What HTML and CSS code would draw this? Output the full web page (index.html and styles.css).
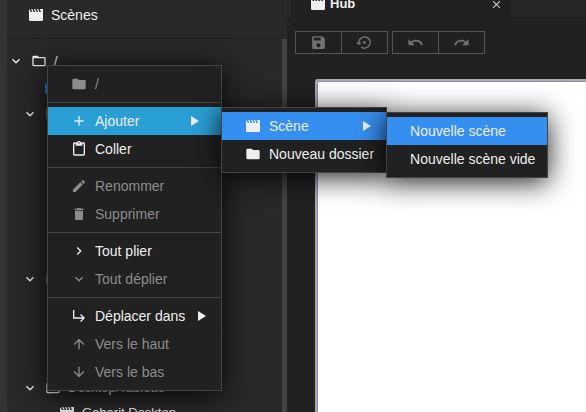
FILE: index.html
```html
<!DOCTYPE html>
<html lang="fr">
<head>
<meta charset="utf-8">
<title>Scènes</title>
<link rel="stylesheet" href="styles.css">
</head>
<body>
<svg class="sprite" aria-hidden="true">
  <symbol id="movie" viewBox="0 0 24 24"><path d="M17.500 3l2 4.500h-2.300l-2-4.500h-2l2 4.500h-2.300l-2-4.500h-2l2 4.500H8.600L6.600 3h-2l2 4.500H4.300L2.300 3.500A2 2 0 0 0 1.500 5v14a2 2 0 0 0 2 2h17a2 2 0 0 0 2-2V3z"/></symbol>
  <symbol id="folder" viewBox="0 0 24 24"><path d="M10 4H4a2 2 0 0 0-2 2v12a2 2 0 0 0 2 2h16a2 2 0 0 0 2-2V8a2 2 0 0 0-2-2h-8z"/></symbol>
  <symbol id="folder-open" viewBox="0 0 24 24"><path d="M20 18H4V8h16m0-2h-8l-2-2H4a2 2 0 0 0-2 2v12a2 2 0 0 0 2 2h16a2 2 0 0 0 2-2V8a2 2 0 0 0-2-2z"/></symbol>
  <symbol id="plus" viewBox="0 0 24 24"><path d="M19 13h-6v6h-2v-6H5v-2h6V5h2v6h6z"/></symbol>
  <symbol id="clipboard" viewBox="0 0 24 24"><path d="M19 20H5V4h2v3h10V4h2m-7-2a1 1 0 1 1 0 2 1 1 0 0 1 0-2m7 0h-4.200a3 3 0 0 0-5.600 0H5a2 2 0 0 0-2 2v16a2 2 0 0 0 2 2h14a2 2 0 0 0 2-2V4a2 2 0 0 0-2-2z"/></symbol>
  <symbol id="pencil" viewBox="0 0 24 24"><path d="M20.7 7c.4-.4.4-1 0-1.400l-2.300-2.300c-.4-.4-1-.4-1.400 0l-1.900 1.800 3.800 3.800M3 17.200V21h3.800L17.800 9.900l-3.800-3.700z"/></symbol>
  <symbol id="trash" viewBox="0 0 24 24"><path d="M19 4h-3.500l-1-1h-5l-1 1H5v2h14M6 19a2 2 0 0 0 2 2h8a2 2 0 0 0 2-2V7H6z"/></symbol>
  <symbol id="right" viewBox="0 0 24 24"><path d="M8.600 16.600L13.200 12 8.600 7.400 10 6l6 6-6 6z"/></symbol>
  <symbol id="down" viewBox="0 0 24 24"><path d="M7.400 8.600L12 13.200l4.600-4.600L18 10l-6 6-6-6z"/></symbol>
  <symbol id="move" viewBox="0 0 24 24"><path d="M21 15l-6 6-1.400-1.400 3.600-3.600H3V3h2v11h12.200l-3.600-3.600L15 9z"/></symbol>
  <symbol id="up-arrow" viewBox="0 0 24 24"><path d="M13 20h-2V8l-5.500 5.500-1.400-1.400L12 4.200l7.900 7.900-1.400 1.400L13 8z"/></symbol>
  <symbol id="down-arrow" viewBox="0 0 24 24"><path d="M11 4h2v12l5.500-5.500 1.400 1.400-7.900 7.900-7.900-7.900 1.400-1.400L11 16z"/></symbol>
  <symbol id="save" viewBox="0 0 24 24"><path d="M15 9H5V5h10m-3 14a3 3 0 1 1 0-6 3 3 0 0 1 0 6m5-16H5a2 2 0 0 0-2 2v14a2 2 0 0 0 2 2h14a2 2 0 0 0 2-2V7z"/></symbol>
  <symbol id="restore" viewBox="0 0 24 24"><path d="M14 12a2 2 0 1 0-4 0 2 2 0 0 0 4 0M12 3a9 9 0 0 0-9 9H0l4 4 4-4H5a7 7 0 1 1 2.900 5.700l-1.400 1.400A9 9 0 1 0 12 3z"/></symbol>
  <symbol id="undo" viewBox="0 0 24 24"><path d="M12.500 8c-2.700 0-5 1-6.900 2.600L2 7v9h9l-3.600-3.600A8 8 0 0 1 12.500 10.500c3.500 0 6.500 2.300 7.600 5.500l2.400-.8A10.500 10.500 0 0 0 12.500 8z"/></symbol>
  <symbol id="redo" viewBox="0 0 24 24"><path d="M18.400 10.600A10.500 10.500 0 0 0 1.500 15.200l2.400.8a8 8 0 0 1 12.700-3.600L13 16h9V7z"/></symbol>
  <symbol id="close" viewBox="0 0 24 24"><path d="M19 6.400L17.600 5 12 10.600 6.400 5 5 6.400l5.600 5.600L5 17.600 6.400 19l5.600-5.600 5.600 5.600 1.400-1.400-5.600-5.600z"/></symbol>
</svg>

<div class="app">
  <aside class="sidebar">
    <h1 class="sidebar-title"><svg class="icon"><use href="#movie"/></svg>Scènes</h1>
    <div class="sidebar-body">
      <div class="tree">
        <div class="group">
          <div class="row root"><svg class="icon"><use href="#down"/></svg><svg class="icon"><use href="#folder-open"/></svg><span>/</span></div>
          <div class="row file"><svg class="icon hub"><use href="#movie"/></svg></div>
        </div>
        <div class="group long">
          <div class="row folder"><svg class="icon"><use href="#down"/></svg><svg class="icon dim"><use href="#folder-open"/></svg></div>
        </div>
        <div class="group medium">
          <div class="row folder"><svg class="icon"><use href="#down"/></svg><svg class="icon dim"><use href="#folder-open"/></svg></div>
          <div class="row"></div>
          <div class="row flagged"><i class="flag"></i></div>
        </div>
        <div class="group">
          <div class="row folder"><svg class="icon"><use href="#down"/></svg><svg class="icon"><use href="#folder-open"/></svg><span>Desktop/Tablette</span></div>
          <div class="row nested"><svg class="icon"><use href="#movie"/></svg><span>Gabarit Desktop</span></div>
        </div>
      </div>
      <div class="scrollbar"></div>
    </div>
  </aside>

  <main class="editor">
    <div class="tabs">
      <div class="tab"><svg class="icon"><use href="#movie"/></svg><b>Hub</b><button class="close" aria-label="Fermer"><svg><use href="#close"/></svg></button></div>
    </div>
    <div class="toolbar">
      <div class="tools">
        <button aria-label="Enregistrer"><svg class="icon"><use href="#save"/></svg></button>
        <button aria-label="Restaurer"><svg class="icon"><use href="#restore"/></svg></button>
      </div>
      <div class="tools">
        <button aria-label="Annuler"><svg class="icon"><use href="#undo"/></svg></button>
        <button aria-label="Rétablir"><svg class="icon"><use href="#redo"/></svg></button>
      </div>
    </div>
    <div class="canvas"></div>
  </main>
</div>

<ul class="menu context">
  <li><button disabled><svg class="icon"><use href="#folder"/></svg>/</button></li>
  <li class="sep"></li>
  <li class="has-sub">
    <button class="open"><svg class="icon"><use href="#plus"/></svg>Ajouter<i class="arrow"></i></button>
    <ul class="menu sub">
      <li class="has-sub">
        <button class="hover"><svg class="icon"><use href="#movie"/></svg>Scène<i class="arrow"></i></button>
        <ul class="menu sub">
          <li><button class="hover">Nouvelle scène</button></li>
          <li><button>Nouvelle scène vide</button></li>
        </ul>
      </li>
      <li><button><svg class="icon"><use href="#folder"/></svg>Nouveau dossier</button></li>
    </ul>
  </li>
  <li><button><svg class="icon"><use href="#clipboard"/></svg>Coller</button></li>
  <li class="sep"></li>
  <li><button disabled><svg class="icon"><use href="#pencil"/></svg>Renommer</button></li>
  <li><button disabled><svg class="icon"><use href="#trash"/></svg>Supprimer</button></li>
  <li class="sep"></li>
  <li><button><svg class="icon"><use href="#right"/></svg>Tout plier</button></li>
  <li><button disabled><svg class="icon"><use href="#down"/></svg>Tout déplier</button></li>
  <li class="sep"></li>
  <li><button><svg class="icon"><use href="#move"/></svg>Déplacer dans<i class="arrow"></i></button></li>
  <li><button disabled><svg class="icon"><use href="#up-arrow"/></svg>Vers le haut</button></li>
  <li><button disabled><svg class="icon"><use href="#down-arrow"/></svg>Vers le bas</button></li>
</ul>
</body>
</html>
```
FILE: styles.css
```css
* { box-sizing: border-box; }

body {
  margin: 0;
  overflow: hidden;
  background: #212121;
  color: #eee;
  font: 14px/20px "Liberation Sans", Arial, sans-serif;
}

button {
  margin: 0;
  border: 0;
  background: none;
  color: inherit;
  font: inherit;
}

.sprite { position: absolute; width: 0; height: 0; }
.icon { flex: none; width: 16px; height: 16px; fill: currentColor; }

.app { display: flex; height: 100vh; }

/* Scene list */
.sidebar {
  display: flex;
  flex-direction: column;
  flex: 0 0 287px;
  border-left: 7px solid #333;
  background: #292929;
}
.sidebar-title {
  display: flex;
  align-items: center;
  gap: 7px;
  height: 39px;
  margin: 0;
  padding: 0 21px 8px;
  border-bottom: 1px solid #212121;
  font-size: 14px;
  font-weight: 400;
}
.sidebar-body { display: flex; flex: 1; min-height: 0; }
.tree { flex: 1; padding-top: 9px; overflow: hidden; font-size: 13px; }
.scrollbar { width: 5px; background: #434343; }
.long { min-height: 165px; }
.medium { min-height: 109px; }
.row { display: flex; align-items: center; gap: 7px; height: 27px; }
.root, .folder { height: 26px; }
.root { padding-left: 1px; }
.folder { padding-left: 15px; }
.file { padding-left: 37px; }
.nested { height: 24px; padding-left: 52px; }
.hub { color: #2d7fe0; }
.dim { color: #999; }
.flagged { padding-left: 214px; }
.flag { width: 2px; height: 3px; background: #8c3421; }

/* Editor */
.editor { display: flex; flex: 1; flex-direction: column; min-width: 0; }
.tabs { height: 17px; padding-left: 4px; background: #262626; }
.tab {
  display: flex;
  align-items: center;
  gap: 4px;
  width: 220px;
  height: 26px;
  margin-top: -9px;
  padding: 0 8px 0 19px;
  background: #212121;
  font-size: 13px;
}
.close { display: flex; margin-left: auto; padding: 0; }
.close svg { width: 13px; height: 13px; fill: #ccc; }
.toolbar { display: flex; gap: 4px; padding: 14px 8px; }
.tools { display: flex; border: 1px solid #555; color: #737373; }
.tools button {
  display: flex;
  align-items: center;
  justify-content: center;
  width: 45px;
  height: 21px;
  padding: 0;
}
.tools button + button { width: 46px; border-left: 1px solid #555; }
.tools .icon { width: 17px; height: 17px; }
.canvas {
  flex: 1;
  margin: 11px 0 0 28px;
  border: solid #aaa;
  border-width: 2px 0 0 2px;
  border-radius: 3px 0 0;
  background: #fff;
  box-shadow: inset 1px 1px #8888c8;
}

/* Menus */
.menu {
  position: absolute;
  margin: 0;
  padding: 4px 0;
  border: 1px solid #444;
  background: #212121;
  box-shadow: 0 4px 28px rgb(0 0 0 / 90%);
  list-style: none;
}
.context { top: 65px; left: 47px; width: 175px; }
.has-sub { position: relative; }
.sub { top: 0; left: 100%; }
.menu button {
  display: flex;
  align-items: center;
  gap: 8px;
  width: 100%;
  height: 28px;
  padding: 0 12px 0 23px;
  white-space: nowrap;
}
.menu button:disabled { color: #8c8c8c; }
.menu .open { padding-right: 19px; background: #2a9fd6; }
.menu .hover { background: #358ff0; }
.sep { height: 1px; margin: 4px 0; background: #444; }
.arrow {
  margin: 0 3px 0 auto;
  border: solid transparent;
  border-width: 5px 0 5px 8px;
  border-left-color: currentColor;
}
```
